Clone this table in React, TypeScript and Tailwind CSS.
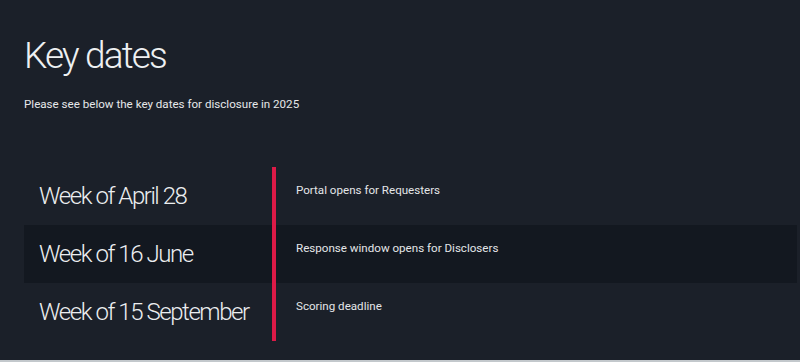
const rows = [
  { date: 'Week of April 28', text: 'Portal opens for Requesters' },
  { date: 'Week of 16 June', text: 'Response window opens for Disclosers' },
  { date: 'Week of 15 September', text: 'Scoring deadline' },
]

export default function App() {
  return (
    <div
      className="h-[362px] w-[800px] overflow-hidden bg-[#1b2029] border-b-2 border-[#c3c8cc]"
      style={{ fontFamily: 'Roboto, "Liberation Sans", sans-serif' }}
    >
      <div className="pl-6 pr-[3px] pt-[29px]">
        <h1 className="text-[37px] font-light leading-[54px] tracking-[-0.05em] text-[#eef0f2]">Key dates</h1>
        <p className="mt-[13px] text-[11.6px] leading-[16px] text-[#e6e8ea]">
          Please see below the key dates for disclosure in 2025
        </p>

        {/* Timeline */}
        <div className="mt-[55px]">
          {rows.map((r, i) => (
            <div key={r.date} className={`flex h-[58px] ${i === 1 ? 'bg-[#131820]' : ''}`}>
              <div className="w-[248px] pl-[15px] pt-[13px] text-[24px] font-light leading-[32px] tracking-[-0.06em] text-[#eceef0]">
                {r.date}
              </div>
              <div className="w-[4px] bg-[#dd1a47]" />
              <div className="pl-[20px] pt-[15px] text-[11.6px] leading-[16px] text-[#e4e6e8]">{r.text}</div>
            </div>
          ))}
        </div>
      </div>
    </div>
  )
}
